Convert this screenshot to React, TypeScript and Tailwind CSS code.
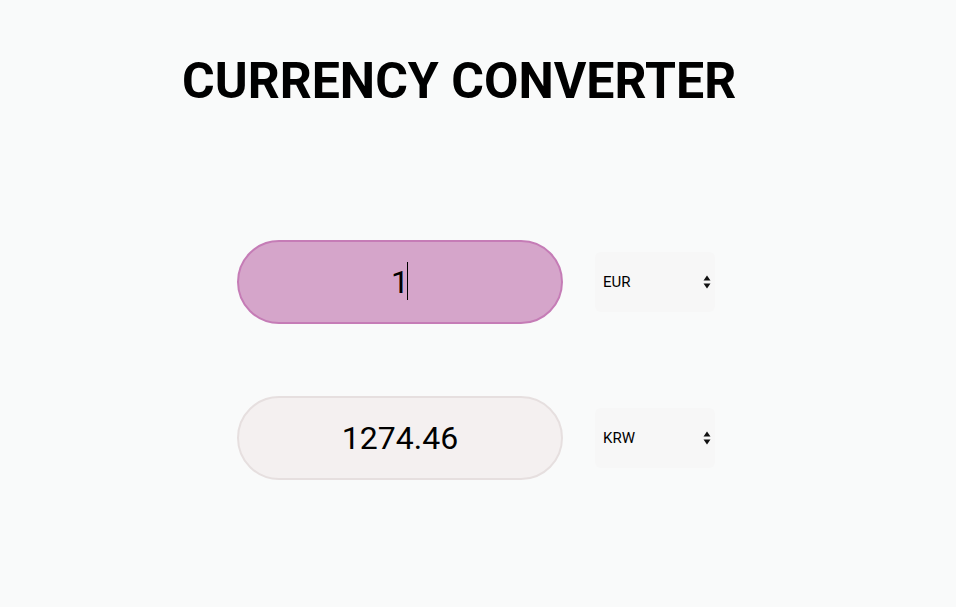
import { useState } from 'react'

const RATES: Record<string, number> = { EUR: 1, KRW: 1274.46, USD: 1.08, JPY: 157.2 }

function CurrencySelect({ value, onChange }: { value: string; onChange: (v: string) => void }) {
  return (
    <div className="relative w-[120px] h-[60px]">
      <select
        value={value}
        onChange={(e) => onChange(e.target.value)}
        className="appearance-none w-full h-full bg-[#f7f7f7] rounded-md pl-2 pr-6 text-[15px] text-black font-['Roboto',sans-serif] outline-none"
      >
        {Object.keys(RATES).map(c => (
          <option key={c} value={c}>{c}</option>
        ))}
      </select>
      {/* up/down arrows */}
      <svg className="absolute right-[4px] top-1/2 -translate-y-1/2 pointer-events-none" width="8" height="14" viewBox="0 0 8 14">
        <path d="M4 0.5 L7.5 5.5 L0.5 5.5 Z" fill="#111" />
        <path d="M4 13.5 L7.5 8.5 L0.5 8.5 Z" fill="#111" />
      </svg>
    </div>
  )
}

export default function App() {
  const [amount, setAmount] = useState('1')
  const [from, setFrom] = useState('EUR')
  const [to, setTo] = useState('KRW')

  const n = parseFloat(amount)
  const result = isNaN(n) ? '' : (Math.round((n * RATES[to]) / RATES[from] * 100) / 100).toString()

  return (
    <div className="min-h-[607px] w-full bg-[#f9fafa] font-['Roboto',sans-serif]">
      <h1 className="pt-[52px] pl-[182px] text-[50px] leading-[58px] font-bold text-black">
        CURRENCY CONVERTER
      </h1>

      <div className="mt-[130px] ml-[237px] flex flex-col gap-[72px]">
        {/* from row */}
        <div className="flex items-center gap-[32px]">
          <div className="relative">
            <input
              autoFocus
              value={amount}
              onChange={(e) => setAmount(e.target.value)}
              className="w-[326px] h-[84px] rounded-full bg-[#d5a5ca] border-2 border-[#c57cb6] text-center text-[32px] text-black outline-none caret-transparent"
            />
            {/* text caret */}
            <span className="absolute left-[170px] top-[22px] w-px h-[38px] bg-black pointer-events-none" />
          </div>
          <CurrencySelect value={from} onChange={setFrom} />
        </div>

        {/* to row */}
        <div className="flex items-center gap-[32px]">
          <input
            readOnly
            value={result}
            className="w-[326px] h-[84px] rounded-full bg-[#f4f0f0] border-2 border-[#e6dfdf] text-center text-[32px] text-black outline-none"
          />
          <CurrencySelect value={to} onChange={setTo} />
        </div>
      </div>
    </div>
  )
}
